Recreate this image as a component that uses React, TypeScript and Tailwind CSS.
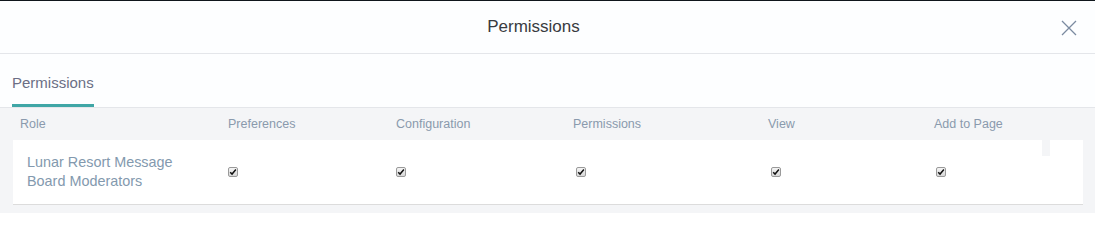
import React from "react";

const columns = ["Preferences", "Configuration", "Permissions", "View", "Add to Page"];

function CheckMark() {
  return (
    <span className="flex h-[10px] w-[10px] items-center justify-center rounded-[2px] border border-[#9a9a9a] bg-gradient-to-b from-[#f4f4f4] to-[#d8d8d8]">
      <svg viewBox="0 0 10 10" className="h-[8px] w-[8px]">
        <path d="M1.5 5.2 L3.8 7.6 L8.6 1.8" fill="none" stroke="#111" strokeWidth="1.8" />
      </svg>
    </span>
  );
}

export default function App() {
  return (
    <div className="flex h-[213px] w-[1095px] flex-col overflow-hidden bg-white font-['Liberation_Sans',Arial,sans-serif]">
      <div className="h-px bg-[#10161c]" />
      <header className="relative flex h-[53px] items-center justify-center border-b border-[#e4e6ea] bg-[#fdfeff] pr-[28px]">
        <h1 className="text-[17px] text-[#393b41]">Permissions</h1>
        <button className="absolute right-[18px] top-[19px] text-[#7b8ba0]">
          <svg viewBox="0 0 16 16" className="h-[16px] w-[16px]">
            <path d="M1 1 L15 15 M15 1 L1 15" stroke="currentColor" strokeWidth="1.3" fill="none" />
          </svg>
        </button>
      </header>
      <nav className="flex h-[54px] items-end border-b border-[#e4e6ea] bg-[#fdfeff] px-3">
        <span className="border-b-[3px] border-[#3fa6a6] pb-[10px] text-[15px] text-[#6b6e85]">Permissions</span>
      </nav>
      <section className="flex-1 bg-[#f4f5f7] pr-3">
        <div className="grid h-[32px] grid-cols-[215px_168px_177px_195px_166px_149px] items-center pl-[13px] text-[12.5px] text-[#8a9aad]">
          <span className="pl-[7px]">Role</span>
          {columns.map((c) => (
            <span key={c}>{c}</span>
          ))}
        </div>
        <div className="relative ml-[13px] grid h-[65px] grid-cols-[215px_168px_177px_195px_166px_149px] items-center border-b border-[#dcdcdc] bg-white text-[14.4px] leading-[19px] text-[#8399ae]">
          <span className="max-w-[175px] pl-[14px]">Lunar Resort Message Board Moderators</span>
          {columns.map((c, i) => (
            <span key={c} className={i === 2 || i === 3 ? "pl-[3px]" : i === 4 ? "pl-[2px]" : ""}>
              <CheckMark />
            </span>
          ))}
          <span className="absolute left-[1029px] top-0 h-[16px] w-[8px] bg-[#f4f5f7]" />
        </div>
      </section>
    </div>
  );
}
